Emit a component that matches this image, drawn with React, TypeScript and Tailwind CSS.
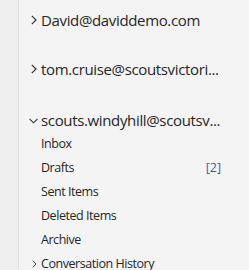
import React from "react";

const Right = ({ cls }: { cls: string }) => (
  <svg className={cls} viewBox="0 0 6 10" fill="none" stroke="#333" strokeWidth="1.2">
    <path d="M0.8 0.8 L5 5 L0.8 9.2" />
  </svg>
);

const Down = () => (
  <svg className="w-[9px] h-[6px]" viewBox="0 0 9 6" fill="none" stroke="#333" strokeWidth="1.1">
    <path d="M0.5 0.8 L4.5 4.8 L8.5 0.8" />
  </svg>
);

export default function App() {
  const font = { fontFamily: '"Open Sans", "Noto Sans", sans-serif' };
  const folders = ["Inbox", "Drafts", "Sent Items", "Deleted Items", "Archive"];
  return (
    <div className="w-[249px] h-[270px] flex bg-[#f4f4f4] text-[#262626] overflow-hidden" style={font}>
      <div className="w-[19px] shrink-0 bg-[#efefef] border-r border-[#e1e1e1]" />
      <div className="flex-1 flex flex-col pt-[5px] min-w-0">
        <div className="h-[30px] shrink-0 flex items-center">
          <div className="w-[22px] flex justify-end pr-[4px]"><Right cls="w-[6px] h-[10px]" /></div>
          <span className="text-[15px] whitespace-nowrap tracking-[-0.35px]">David@daviddemo.com</span>
        </div>
        <div className="h-[30px] shrink-0 mt-[19px] flex items-center">
          <div className="w-[22px] flex justify-end pr-[4px]"><Right cls="w-[6px] h-[10px]" /></div>
          <span className="text-[15px] whitespace-nowrap tracking-[-0.35px]">tom.cruise@scoutsvictori...</span>
        </div>
        <div className="h-[23px] shrink-0 mt-[25px] flex items-center">
          <div className="w-[22px] flex justify-end pr-[3px]"><Down /></div>
          <span className="text-[15px] whitespace-nowrap tracking-[-0.35px]">scouts.windyhill@scoutsv...</span>
        </div>
        {folders.map((f) => (
          <div key={f} className="h-[24px] shrink-0 flex items-center pl-[22px] pr-[28px]">
            <span className="text-[12.5px] flex-1 tracking-[-0.45px]">{f}</span>
            {f === "Drafts" && <span className="text-[12.5px] text-[#1f64b8]">[2]</span>}
          </div>
        ))}
        <div className="h-[24px] shrink-0 flex items-center">
          <div className="w-[22px] flex justify-end pr-[4px]"><Right cls="w-[5px] h-[8px]" /></div>
          <span className="text-[12.5px] whitespace-nowrap tracking-[-0.45px]">Conversation History</span>
        </div>
      </div>
    </div>
  );
}
